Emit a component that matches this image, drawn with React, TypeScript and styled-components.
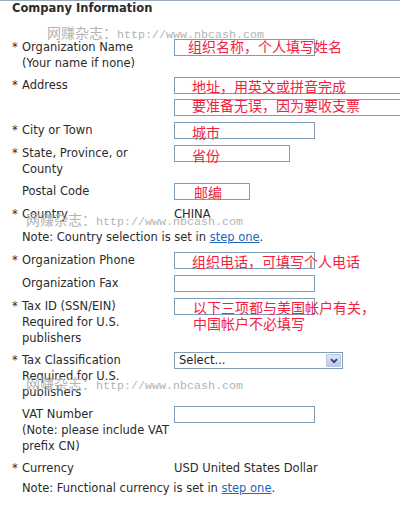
import React from "react";
import styled, { createGlobalStyle } from "styled-components";

const GlobalStyle = createGlobalStyle`
  html, body { margin: 0; padding: 0; background: #fff; overflow: hidden; }
  body { font-family: "DejaVu Sans", Verdana, sans-serif; font-size: 11.5px; color: #2b2b2b; }
`;

const Page = styled.div`
  position: relative;
  width: 400px;
  height: 510px;
  box-sizing: border-box;
  border-top: 1px solid #9aa9ba;
  padding: 0 0 0 12px;
  overflow: hidden;
`;

const Title = styled.h2`
  margin: 0 0 21px;
  font-size: 11.5px;
  font-weight: bold;
  line-height: 14px;
  color: #2b2b2b;
`;

const Form = styled.div`
  display: flex;
  flex-direction: column;
`;

const Row = styled.div<{ $compact?: boolean }>`
  display: grid;
  grid-template-columns: 162px 1fr;
  padding: 3px 0 ${(p) => (p.$compact ? 1 : 3)}px;
  line-height: 16px;
`;

const Label = styled.div`
  display: grid;
  grid-template-columns: 10px 1fr;
  white-space: nowrap;
`;

const Star = styled.span``;

const LabelLine = styled.div``;

const Value = styled.div<{ $min?: boolean }>`
  display: flex;
  flex-direction: column;
  align-items: flex-start;
  gap: 5px;
  min-height: ${(p) => (p.$min === false ? 0 : 17)}px;
  white-space: nowrap;
`;

const NoteRow = styled.div`
  padding: 3px 0 3px 10px;
  line-height: 17px;
  white-space: nowrap;
`;

const Link = styled.a`
  color: #2266bb;
  text-decoration: underline;
`;

const InputWrap = styled.div`
  position: relative;
`;

const TextInput = styled.input<{ $w: number }>`
  display: block;
  width: ${(p) => p.$w}px;
  height: 17px;
  box-sizing: border-box;
  margin: 0;
  padding: 0 2px;
  border: 1px solid #7f9db9;
  background: #fff;
  font: inherit;
  outline: none;
`;

const Annotation = styled.span<{ $top: number; $left: number }>`
  position: absolute;
  top: ${(p) => p.$top}px;
  left: ${(p) => p.$left}px;
  font-family: "Noto Sans CJK SC", sans-serif;
  font-size: 14px;
  line-height: 16px;
  color: #f2223f;
  white-space: pre;
  pointer-events: none;
`;

const Select = styled.div`
  width: 169px;
  height: 17px;
  box-sizing: border-box;
  border: 1px solid #7f9db9;
  background: #fff;
  display: flex;
  align-items: center;
  justify-content: space-between;
  padding: 0 1px 0 4px;
  line-height: 15px;
  color: #222;
`;

const SelectButton = styled.span`
  width: 15px;
  height: 13px;
  box-sizing: border-box;
  border: 1px solid #b7c5e2;
  border-radius: 1px;
  background: linear-gradient(#dce5f8, #bdcbea);
  display: flex;
  align-items: center;
  justify-content: center;
`;

const Watermark = styled.div<{ $x: number; $y: number }>`
  position: absolute;
  left: ${(p) => p.$x}px;
  top: ${(p) => p.$y}px;
  color: #b3b3b3;
  font-family: "Noto Sans CJK SC", sans-serif;
  font-size: 14px;
  line-height: 14px;
  white-space: nowrap;
  pointer-events: none;
`;

const WatermarkUrl = styled.span`
  font-family: "Liberation Mono", monospace;
  font-size: 11.67px;
`;

type FieldProps = {
  star?: boolean;
  lines: string[];
  children?: React.ReactNode;
  compact?: boolean;
  min?: boolean;
};

function Field({ star, lines, children, compact, min }: FieldProps) {
  return (
    <Row $compact={compact}>
      <Label>
        <Star>{star ? "*" : ""}</Star>
        <div>
          {lines.map((l) => (
            <LabelLine key={l}>{l}</LabelLine>
          ))}
        </div>
      </Label>
      <Value $min={min}>{children}</Value>
    </Row>
  );
}

function Mark({ x, y }: { x: number; y: number }) {
  return (
    <Watermark $x={x} $y={y}>
      网赚杂志：<WatermarkUrl>http://www.nbcash.com</WatermarkUrl>
    </Watermark>
  );
}

export default function App() {
  return (
    <>
      <GlobalStyle />
      <Page>
        <Title>Company Information</Title>
        <Form>
          <Field star lines={["Organization Name", "(Your name if none)"]}>
            <InputWrap>
              <TextInput $w={141} readOnly />
              <Annotation $top={-1} $left={14}>组织名称，个人填写姓名</Annotation>
            </InputWrap>
          </Field>
          <Field star lines={["Address"]}>
            <InputWrap>
              <TextInput $w={240} readOnly />
              <Annotation $top={1} $left={18}>地址，用英文或拼音完成</Annotation>
            </InputWrap>
            <InputWrap>
              <TextInput $w={240} readOnly />
              <Annotation $top={-2} $left={18}>要准备无误，因为要收支票</Annotation>
            </InputWrap>
          </Field>
          <Field star lines={["City or Town"]}>
            <InputWrap>
              <TextInput $w={141} readOnly />
              <Annotation $top={2} $left={18}>城市</Annotation>
            </InputWrap>
          </Field>
          <Field star lines={["State, Province, or", "County"]}>
            <InputWrap>
              <TextInput $w={116} readOnly />
              <Annotation $top={2} $left={18}>省份</Annotation>
            </InputWrap>
          </Field>
          <Field lines={["Postal Code"]}>
            <InputWrap>
              <TextInput $w={76} readOnly />
              <Annotation $top={1} $left={20}>邮编</Annotation>
            </InputWrap>
          </Field>
          <Field star lines={["Country"]}>
            CHINA
          </Field>
          <NoteRow>
            Note: Country selection is set in <Link href="#">step one</Link>.
          </NoteRow>
          <Field star lines={["Organization Phone"]}>
            <InputWrap>
              <TextInput $w={141} readOnly />
              <Annotation $top={1} $left={18}>组织电话，可填写个人电话</Annotation>
            </InputWrap>
          </Field>
          <Field lines={["Organization Fax"]}>
            <InputWrap>
              <TextInput $w={141} readOnly />
            </InputWrap>
          </Field>
          <Field star lines={["Tax ID (SSN/EIN)", "Required for U.S.", "publishers"]}>
            <InputWrap>
              <TextInput $w={141} readOnly />
              <Annotation $top={1} $left={19}>{"以下三项都与美国帐户有关，\n中国帐户不必填写"}</Annotation>
            </InputWrap>
          </Field>
          <Field star lines={["Tax Classification", "Required for U.S.", "publishers"]}>
            <Select>
              <span>Select...</span>
              <SelectButton>
                <svg width="8" height="6" viewBox="0 0 8 6">
                  <path d="M1 1.2 L4 4.2 L7 1.2" fill="none" stroke="#2b3a78" strokeWidth="1.8" />
                </svg>
              </SelectButton>
            </Select>
          </Field>
          <Field lines={["VAT Number", "(Note: please include VAT", "prefix CN)"]}>
            <InputWrap>
              <TextInput $w={141} readOnly />
            </InputWrap>
          </Field>
          <Field star compact min={false} lines={["Currency"]}>
            USD United States Dollar
          </Field>
          <NoteRow>
            Note: Functional currency is set in <Link href="#">step one</Link>.
          </NoteRow>
        </Form>
        <Mark x={47} y={24} />
        <Mark x={26} y={211} />
        <Mark x={26} y={375} />
      </Page>
    </>
  );
}
